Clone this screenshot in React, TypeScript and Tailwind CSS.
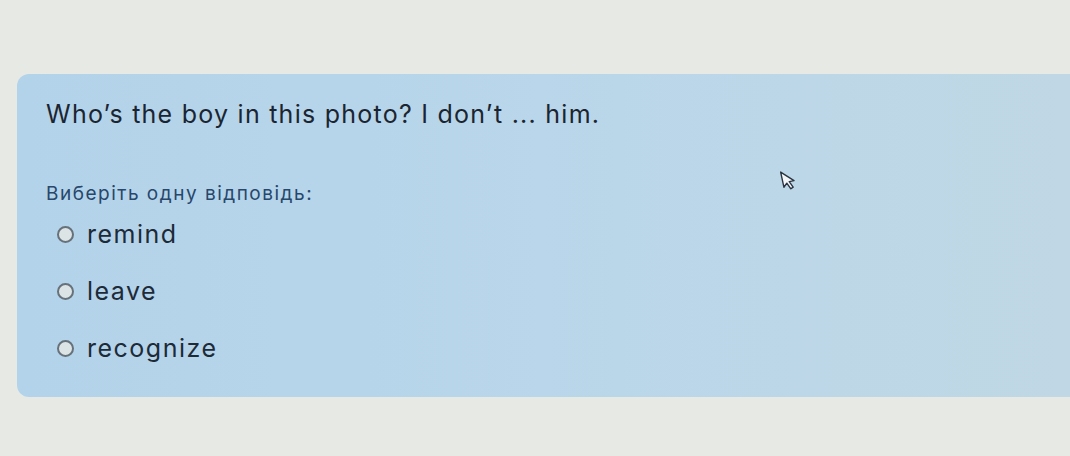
const options = ['remind', 'leave', 'recognize'];

export default function App() {
  return (
    <div className="w-[1070px] h-[456px] overflow-hidden bg-[#e7e9e5] pt-[74px] pl-[17px]" style={{ fontFamily: 'Inter, "Noto Sans", sans-serif' }}>
      <div className="relative h-[323px] rounded-l-[12px] bg-gradient-to-r from-[#b3d3ea] via-[#b9d6ea] to-[#c0d8e5] pl-[29px] pt-[25px]">
        <h1 className="text-[25px] leading-[30px] text-[#1b2531] tracking-[1.25px]">
          Who’s the boy in this photo? I don’t ... him.
        </h1>

        <p className="mt-[53px] text-[19px] leading-[24px] text-[#27476b] tracking-[1.5px]">Виберіть одну відповідь:</p>

        <div className="mt-[13px] flex flex-col gap-[27px]">
          {options.map((o) => (
            <label key={o} className="flex items-center gap-[13px] pl-[11px] h-[30px]">
              <span className="w-[17px] h-[17px] rounded-full border-2 border-[#66717a] bg-[#dde4e6]" />
              <span className="text-[25px] leading-[30px] text-[#1d2a38] tracking-[1.5px]">{o}</span>
            </label>
          ))}
        </div>

        {/* mouse pointer */}
        <svg className="absolute left-[764px] top-[95px] -rotate-12" width="16" height="22" viewBox="0 0 16 22">
          <path d="M1.5 1.5 L1.5 17 L5.2 13.6 L8 20 L10.6 18.8 L7.9 12.6 L12.8 12.6 Z" fill="#f4f7f9" stroke="#2b3542" strokeWidth="1.4" strokeLinejoin="round" />
        </svg>
      </div>
    </div>
  );
}
